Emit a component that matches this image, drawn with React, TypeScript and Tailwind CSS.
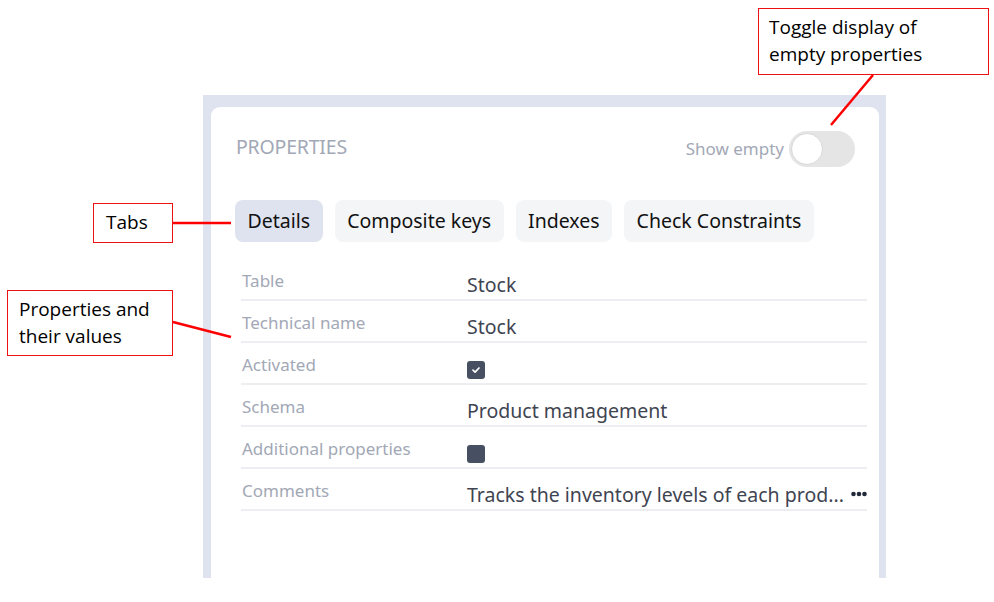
import React from 'react';

const font = { fontFamily: '"Noto Sans", "Open Sans", sans-serif' };

const TABS = ['Details', 'Composite keys', 'Indexes', 'Check Constraints'];

type Row = { label: string; value?: string; check?: 'on' | 'off'; more?: boolean };

const ROWS: Row[] = [
  { label: 'Table', value: 'Stock' },
  { label: 'Technical name', value: 'Stock' },
  { label: 'Activated', check: 'on' },
  { label: 'Schema', value: 'Product management' },
  { label: 'Additional properties', check: 'off' },
  { label: 'Comments', value: 'Tracks the inventory levels of each prod...', more: true },
];

function Checkbox({ checked }: { checked: boolean }) {
  return (
    <div className="mt-[18px] flex h-[18px] w-[18px] items-center justify-center rounded-[3px] bg-[#475063]">
      {checked && (
        <svg width="10" height="10" viewBox="0 0 10 10" fill="none">
          <path d="M2 5.2 L4.1 7.2 L8 3" stroke="#fff" strokeWidth="1.7" strokeLinecap="round" strokeLinejoin="round" />
        </svg>
      )}
    </div>
  );
}

function PropertyRow({ row }: { row: Row }) {
  return (
    <div className="flex h-[42px] items-start border-b-2 border-[#eceef2]">
      <div className="w-[226px] shrink-0 pl-px pt-[10px] text-[17px] leading-[24px] text-[#a2a8b6]">{row.label}</div>
      {row.check ? (
        <Checkbox checked={row.check === 'on'} />
      ) : (
        <div className="flex min-w-0 flex-1 items-start pt-[12px]">
          <span className="whitespace-nowrap text-[19.5px] leading-[28px] text-[#3f4451]">{row.value}</span>
          {row.more && (
            <svg className="ml-auto mt-[10px] shrink-0" width="16" height="6" viewBox="0 0 16 6">
              <circle cx="2.5" cy="3" r="2.3" fill="#1f2937" />
              <circle cx="8" cy="3" r="2.3" fill="#1f2937" />
              <circle cx="13.5" cy="3" r="2.3" fill="#1f2937" />
            </svg>
          )}
        </div>
      )}
    </div>
  );
}

function Callout({ className, children }: { className: string; children: React.ReactNode }) {
  return (
    <div
      className={`absolute border border-[#e11] bg-white text-[19px] leading-[27px] text-black ${className}`}
      style={{ fontFamily: '"Open Sans", "Noto Sans", sans-serif' }}
    >
      {children}
    </div>
  );
}

export default function App() {
  return (
    <div className="relative h-[602px] w-[994px] overflow-hidden bg-white" style={font}>
      <div className="pl-[203px] pt-[95px]">
        {/* Panel */}
        <div className="flex h-[483px] w-[683px] flex-col bg-[#dfe3ef] pl-2 pr-[7px] pt-3">
          <div className="flex-1 rounded-t-[9px] bg-white px-6 pt-6">
            {/* Header */}
            <div className="flex h-9 items-center justify-between">
              <h2 className="-mt-1 ml-px text-[19.5px] tracking-[-0.2px] text-[#a2a8b6]">PROPERTIES</h2>
              <div className="flex items-center gap-[5px]">
                <span className="text-[17px] text-[#a2a8b6]">Show empty</span>
                <div className="flex h-[36px] w-[66px] items-center rounded-full bg-[#e5e5e5] pl-[2px]">
                  <div className="h-[32px] w-[32px] rounded-full border border-[#d8d8d8] bg-white" />
                </div>
              </div>
            </div>

            {/* Tabs */}
            <div className="mt-[33px] flex gap-3">
              {TABS.map((t, i) => (
                <button
                  key={t}
                  className={`h-[42px] rounded-[8px] px-[12.5px] text-[19.5px] text-[#111] ${
                    i === 0 ? 'bg-[#dfe3ef]' : 'bg-[#f4f5f7]'
                  }`}
                >
                  {t}
                </button>
              ))}
            </div>

            {/* Properties */}
            <div className="-mr-3 ml-1.5 mt-[17px]">
              {ROWS.map((r) => (
                <PropertyRow key={r.label} row={r} />
              ))}
            </div>
          </div>
        </div>
      </div>

      {/* Annotations */}
      <Callout className="left-[758px] top-[8px] h-[67px] w-[231px] pl-[10px] pt-[5px]">
        Toggle display of
        <br />
        empty properties
      </Callout>
      <Callout className="left-[93px] top-[203px] h-[40px] w-[80px] pl-[12px] pt-[5px]">Tabs</Callout>
      <Callout className="left-[7px] top-[290px] h-[66px] w-[166px] pl-[11px] pt-[5px]">
        Properties and
        <br />
        their values
      </Callout>
      <svg className="pointer-events-none absolute left-0 top-0" width="994" height="602">
        <line x1="873" y1="75" x2="831" y2="125" stroke="#f00" strokeWidth="2.5" />
        <line x1="173" y1="223" x2="231" y2="223" stroke="#f00" strokeWidth="2.5" />
        <line x1="173" y1="322" x2="231" y2="337" stroke="#f00" strokeWidth="2.5" />
      </svg>
    </div>
  );
}
